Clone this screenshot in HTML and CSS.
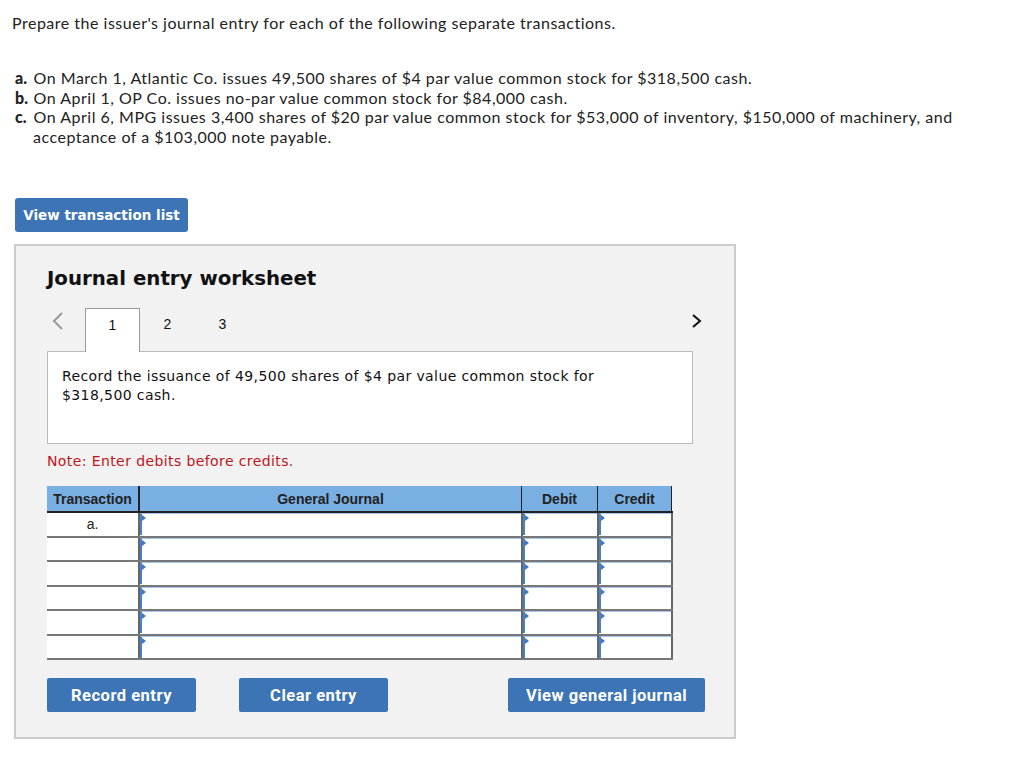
FILE: index.html
```html
<!DOCTYPE html>
<html lang="en">
<head>
    <meta charset="UTF-8">
    <title>Journal entry worksheet</title>
    <link rel="stylesheet" href="styles.css">
</head>
<body>
    <div class="page">
        <p class="intro">Prepare the issuer's journal entry for each of the following separate transactions.</p>
        <ol class="items">
            <li><b>a.</b> On March 1, Atlantic Co. issues 49,500 shares of $4 par value common stock for $318,500 cash.</li>
            <li><b>b.</b> On April 1, OP Co. issues no-par value common stock for $84,000 cash.</li>
            <li><b>c.</b> On April 6, MPG issues 3,400 shares of $20 par value common stock for $53,000 of inventory, $150,000 of machinery, and acceptance of a $103,000 note payable.</li>
        </ol>

        <button class="btn btn-list">View transaction list</button>

        <div class="worksheet">
            <h2 class="title">Journal entry worksheet</h2>

            <div class="tabs">
                <span class="arrow prev">
                    <svg width="12" height="18" viewBox="0 0 12 18"><path d="M10 1 L2 9 L10 17" fill="none" stroke="#999" stroke-width="2"/></svg>
                </span>
                <span class="tab active">1</span>
                <span class="tab">2</span>
                <span class="tab">3</span>
                <span class="arrow next">
                    <svg width="12" height="18" viewBox="0 0 12 18"><path d="M2 3 L9 9 L2 15" fill="none" stroke="#111" stroke-width="2"/></svg>
                </span>
            </div>

            <div class="desc">Record the issuance of 49,500 shares of $4 par value common stock for<br>$318,500 cash.</div>

            <p class="note">Note: Enter debits before credits.</p>

            <table class="journal">
                <thead>
                    <tr>
                        <th class="c-tr">Transaction</th>
                        <th class="c-gj">General Journal</th>
                        <th class="c-dr">Debit</th>
                        <th class="c-cr">Credit</th>
                    </tr>
                </thead>
                <tbody id="rows"></tbody>
            </table>

            <div class="actions">
                <button class="btn">Record entry</button>
                <button class="btn">Clear entry</button>
                <button class="btn btn-view">View general journal</button>
            </div>
        </div>
    </div>

    <script>
        const rows = document.getElementById('rows');
        for (let i = 0; i < 6; i++) {
            const tr = document.createElement('tr');
            tr.innerHTML =
                '<td class="c-tr">' + (i === 0 ? 'a.' : '') + '</td>' +
                '<td class="cell"><div class="input"></div></td>' +
                '<td class="cell"><div class="input"></div></td>' +
                '<td class="cell"><div class="input"></div></td>';
            rows.appendChild(tr);
        }
    </script>
</body>
</html>
```

FILE: styles.css
```css
body {
    margin: 0;
    background: #fff;
    color: #222;
    font-family: Lato, "Open Sans", sans-serif;
}
.page {
    padding: 13px 0 0 12px;
}
.intro {
    margin: 0;
    font-size: 16px;
    letter-spacing: 0.5px;
    line-height: 20px;
}
.items {
    list-style: none;
    margin: 35px 0 0;
    padding: 0 0 0 3px;
    font-size: 16px;
    letter-spacing: 0.5px;
    line-height: 19.5px;
}
.items li {
    padding-left: 18px;
    text-indent: -18px;
    width: 950px;
}
.items b {
    display: inline-block;
    width: 14px;
    text-indent: 0;
    font-weight: 900;
    letter-spacing: 0;
}
.btn {
    height: 34px;
    padding: 0 20px;
    border: none;
    border-radius: 2px;
    background: #3c74b6;
    color: #fff;
    font-family: Roboto, sans-serif;
    font-weight: 700;
    font-size: 16.5px;
    letter-spacing: 0.5px;
    cursor: pointer;
}
.btn-list {
    margin: 52px 0 0 3px;
    width: 173px;
    padding: 0;
    font-family: "DejaVu Sans", Verdana, sans-serif;
    font-size: 13.5px;
    letter-spacing: 0;
    border-radius: 3px;
}
.worksheet {
    margin: 12px 0 0 2px;
    width: 722px;
    height: 495px;
    box-sizing: border-box;
    border: 2px solid #ccc;
    background: #f2f2f2;
    padding: 19px 0 0 31px;
}
.title {
    margin: 0;
    font-family: "DejaVu Sans", Verdana, sans-serif;
    font-size: 19.8px;
    font-weight: 700;
    color: #111;
    line-height: 28px;
}
.tabs {
    display: flex;
    align-items: flex-end;
    margin-top: 14px;
    height: 44px;
    width: 656px;
    font-family: Arial, "Liberation Sans", sans-serif;
    font-size: 14px;
    color: #111;
}
.tab {
    width: 55px;
    height: 43px;
    box-sizing: border-box;
    display: flex;
    align-items: center;
    justify-content: center;
    padding-bottom: 12px;
}
.tab.active {
    background: #fff;
    border: 1px solid #999;
    border-bottom: none;
    height: 44px;
    margin-bottom: -1px;
    position: relative;
    z-index: 1;
}
.arrow {
    height: 44px;
    display: flex;
    align-items: center;
    padding-bottom: 16px;
    box-sizing: border-box;
}
.arrow.prev {
    width: 38px;
    padding-left: 5px;
}
.arrow.next {
    margin-left: auto;
}
.desc {
    width: 646px;
    height: 93px;
    box-sizing: border-box;
    background: #fff;
    border: 1px solid #bbb;
    padding: 15px 14px;
    font-family: "DejaVu Sans", Verdana, sans-serif;
    font-size: 14px;
    letter-spacing: 0.4px;
    line-height: 19px;
    color: #111;
}
.note {
    margin: 8px 0 0;
    font-family: "DejaVu Sans", Verdana, sans-serif;
    font-size: 14px;
    letter-spacing: 0.4px;
    line-height: 18px;
    color: #c0141c;
}
.journal {
    margin-top: 16px;
    border-collapse: collapse;
    font-family: Arial, "Liberation Sans", sans-serif;
    font-size: 14px;
}
.journal th {
    height: 25px;
    padding: 0;
    background: #7aafe3;
    color: #222;
    font-weight: 700;
    border: 1px solid #222;
    border-top: none;
    border-bottom: 2px solid #222;
}
.journal th.c-tr {
    border-left: none;
    border-right-width: 2px;
}
.c-tr { width: 91px; }
.c-gj { width: 381px; }
.c-dr { width: 75px; }
.c-cr { width: 73px; }
.journal td {
    height: 22.5px;
    padding: 0;
    background: #fff;
    border-bottom: 2px solid #777;
}
.journal td.c-tr {
    text-align: center;
    color: #222;
    border-right: 2px solid #666;
}
.journal td.cell {
    border-right: 2px solid #666;
}
.input {
    height: 22px;
    box-sizing: border-box;
    border-left: 2px solid #4a82c4;
    border-top: 1px solid #a9c6ea;
    position: relative;
}
.input::before {
    content: "";
    position: absolute;
    left: 0;
    top: 1px;
    border-left: 4px solid #3a78c9;
    border-top: 3px solid transparent;
    border-bottom: 3px solid transparent;
}
.actions {
    display: flex;
    margin-top: 18px;
}
.actions .btn {
    width: 149px;
    padding: 0;
    margin-right: 43px;
}
.actions .btn-view {
    width: 197px;
    margin-left: 77px;
    margin-right: 0;
}
```
